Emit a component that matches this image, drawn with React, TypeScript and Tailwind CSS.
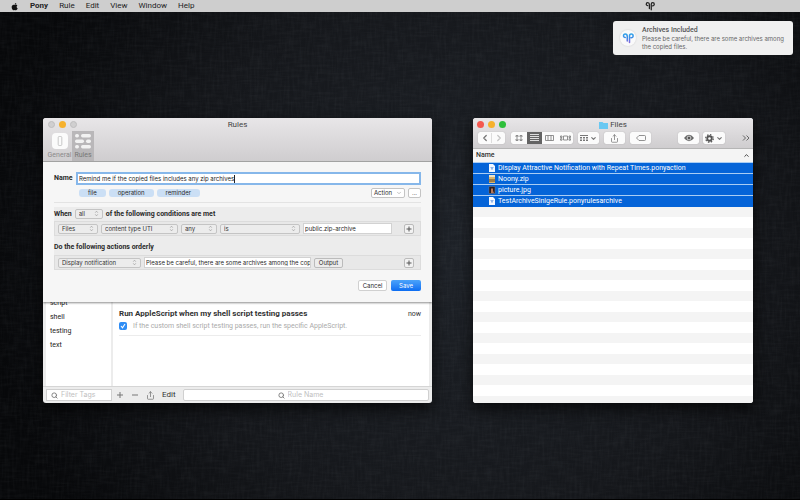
import type { ReactNode } from "react";
import { ChevronDown, ChevronLeft, ChevronRight, ChevronUp, Search, Share } from "lucide-react";

const control = "font-['Inter','Liberation_Sans',sans-serif] text-[6px]";

function Wallpaper() {
  return (
    <svg className="absolute inset-0 h-full w-full" aria-hidden="true">
      <filter id="weft" x="0" y="0" width="100%" height="100%">
        <feTurbulence type="fractalNoise" baseFrequency="0.06 0.4" numOctaves="2" seed="4" />
        <feColorMatrix values="0 0 0 0 0.6  0 0 0 0 0.65  0 0 0 0 0.7  1.600 0 0 0 -0.600" />
      </filter>
      <filter id="warp" x="0" y="0" width="100%" height="100%">
        <feTurbulence type="fractalNoise" baseFrequency="0.4 0.06" numOctaves="2" seed="9" />
        <feColorMatrix values="0 0 0 0 0.6  0 0 0 0 0.65  0 0 0 0 0.7  1.600 0 0 0 -0.600" />
      </filter>
      <rect width="100%" height="100%" filter="url(#weft)" opacity="0.04" />
      <rect width="100%" height="100%" filter="url(#warp)" opacity="0.04" />
    </svg>
  );
}

function Pony({ className, color }: { className: string; color: string }) {
  return (
    <svg viewBox="0 0 24 24" className={className} fill="none" stroke={color} strokeWidth="3" strokeLinecap="round" aria-hidden="true">
      <defs>
        <linearGradient id="pony-tint" gradientUnits="userSpaceOnUse" x1="0" y1="2" x2="0" y2="22">
          <stop offset="0" stopColor="#2fa8ea" />
          <stop offset="0.500" stopColor="#3f8be6" />
          <stop offset="1" stopColor="#8a62dc" />
        </linearGradient>
      </defs>
      <path d="M6.500 11A3.500 3.500 0 1 1 6.500 4c3 0 4 2 4 4.500V18" />
      <path d="M15 21V8c0-2.500 1.500-4 3.500-4a3.500 3.500 0 0 1 0 7.500H18" />
    </svg>
  );
}

function Steps() {
  return (
    <svg viewBox="0 0 6 8" className="pointer-events-none absolute top-px right-1 h-[7px] w-[5px]" fill="none" stroke="#999" strokeWidth="0.8" aria-hidden="true">
      <path d="M1.500 3 3 1.200 4.500 3M1.500 5 3 6.800 4.500 5" />
    </svg>
  );
}

function Popup({ label, value, width }: { label: string; value: string; width: string }) {
  return (
    <span className={`relative flex h-[10px] shrink-0 ${width}`}>
      <select aria-label={label} className={`w-full appearance-none rounded-[2px] border border-[#c4c4c4] bg-[#ececec] pl-[3px] leading-[8px] font-normal text-[#333] ${control}`}>
        <option>{value}</option>
      </select>
      <Steps />
    </span>
  );
}

function Row({ children }: { children: ReactNode }) {
  return (
    <div className="flex h-[15px] items-center gap-[3px] border border-[#dcdcdc] bg-[#e8e8e8] pr-1.5 pl-[3px]">
      {children}
      <button type="button" aria-label="Add" className="ml-auto flex h-[10px] w-[10px] items-center justify-center rounded-[2px] border border-[#bbb] bg-[#f2f2f2]">
        <svg viewBox="0 0 6 6" className="h-[6px] w-[6px]" stroke="#555" aria-hidden="true">
          <path d="M3 .5v5M.5 3h5" />
        </svg>
      </button>
    </div>
  );
}

function Sheet() {
  return (
    <form className="absolute inset-x-0 top-0 h-[140px] bg-[#f6f6f6] px-[11px] pt-2.5 text-[7px] leading-[9px] text-[#2a2a2a] shadow-[0_1px_2px_rgba(0,0,0,0.45)]">
      <div className="flex items-center gap-1">
        <label htmlFor="rule-name" className="w-[18px] font-bold">Name</label>
        <div className="flex h-[13px] min-w-0 flex-1 items-center border-2 border-[#86b7ea] bg-white px-px">
          <input id="rule-name" defaultValue="Remind me if the copied files includes any zip archives" className={`[field-sizing:content] leading-[9px] text-[#222] outline-none ${control}`} />
          <span className="h-2 w-px bg-[#222]" />
        </div>
      </div>
      <div className={`mt-[3px] flex items-center gap-[3px] pl-[25px] ${control}`}>
        {["file", "operation", "reminder"].map((t) => (
          <span key={t} className="h-2 rounded-[3px] bg-[#cbdff5] px-[9px] leading-[8px]">{t}</span>
        ))}
        <button type="button" className="ml-auto flex h-[10px] w-[34px] items-center justify-center gap-1 rounded-[2px] border border-[#c4c4c4] bg-white leading-[8px]">
          Action <ChevronDown className="h-[6px] w-[6px] text-[#888]" />
        </button>
        <button type="button" className="h-[10px] w-[13px] rounded-[2px] border border-[#c4c4c4] bg-white leading-[6px]">...</button>
      </div>
      <hr className="mt-1 border-[#e3e3e3]" />
      <div className="mt-1 bg-[#ececec]">
        <div className="flex h-[14px] items-center gap-[3px] font-bold">
          When <Popup label="Match" value="all" width="w-[28px]" /> of the following conditions are met
        </div>
        <Row>
          <Popup label="Subject" value="Files" width="w-[40px]" />
          <Popup label="Attribute" value="content type UTI" width="w-[77px]" />
          <Popup label="Quantity" value="any" width="w-[36px]" />
          <Popup label="Comparison" value="is" width="w-[80px]" />
          <input aria-label="Value" defaultValue="public.zip-archive" className={`h-[11px] w-[89px] border border-[#d2d2d2] bg-white pl-px ${control}`} />
        </Row>
        <h3 className="flex h-[19px] items-center pt-1 font-bold">Do the following actions orderly</h3>
        <Row>
          <Popup label="Action type" value="Display notification" width="w-[83px]" />
          <input aria-label="Message" defaultValue="Please be careful, there are some archives among the copied files." className={`h-[11px] w-[167px] border border-[#d2d2d2] bg-white pl-px ${control}`} />
          <button type="button" className={`h-[10px] w-[29px] rounded-[2px] border border-[#bbb] bg-[#ececec] leading-[8px] ${control}`}>Output</button>
        </Row>
      </div>
      <div className={`mt-2.5 flex justify-end gap-1 ${control}`}>
        <button type="button" className="h-[11px] w-[29px] rounded-[2px] border border-[#d0d0d0] bg-white leading-[9px]">Cancel</button>
        <button type="submit" className="h-[11px] w-[30px] rounded-[2px] bg-linear-to-b from-[#4ba3fa] to-[#0b6df2] leading-[11px] text-white">Save</button>
      </div>
    </form>
  );
}

function RulesWindow() {
  return (
    <section className="absolute top-[118px] left-[43px] flex h-[285px] w-[389px] flex-col overflow-hidden rounded-[3px] bg-[#ececec] shadow-[0_6px_16px_rgba(0,0,0,0.7)]">
      <header className="relative h-[44px] border-b border-[#a8a8a8] bg-linear-to-b from-[#e8e6e8] to-[#cfcdcf] text-[7px]">
        <h1 className="pt-0.5 text-center text-[8px] leading-[10px] text-[#444]">Rules</h1>
        <div className="absolute top-[3px] left-[5px] flex gap-1">
          <i className="h-[7px] w-[7px] rounded-full border border-[#bebdbe] bg-[#d0cfd0]" />
          <i className="h-[7px] w-[7px] rounded-full bg-[#f6b12d]" />
          <i className="h-[7px] w-[7px] rounded-full border border-[#bebdbe] bg-[#d0cfd0]" />
        </div>
        <nav className="flex pt-px pl-1 text-center leading-[9px]">
          <button className="flex w-[25px] flex-col items-center gap-0.5 pt-[2px] text-[#8b8a8b]">
            <svg viewBox="0 0 16 16" className="h-4 w-4" aria-hidden="true">
              <rect width="16" height="16" rx="4" fill="#fbfbfb" />
              <rect x="6.200" y="3.500" width="3.600" height="9" rx="1" fill="none" stroke="#bbb" strokeWidth="0.800" />
            </svg>
            General
          </button>
          <button className="flex h-[30px] w-[22px] flex-col items-center gap-0.5 bg-[#b9b7b9] pt-[2px] text-[#777]">
            <svg viewBox="0 0 16 16" className="h-4 w-4" fill="#f2f2f2" aria-hidden="true">
              <rect y="1" width="4" height="3.500" rx="1.700" />
              <rect x="6" y="1" width="10" height="3.500" rx="1.700" />
              <rect y="6.500" width="9" height="3.500" rx="1.700" />
              <rect x="11" y="6.500" width="5" height="3.500" rx="1.700" />
              <rect y="12" width="4" height="3.500" rx="1.700" />
              <rect x="6" y="12" width="10" height="3.500" rx="1.700" />
            </svg>
            Rules
          </button>
        </nav>
      </header>
      <div className="relative flex min-h-0 flex-1 flex-col">
        <div className="mx-[3px] flex min-h-0 flex-1">
          <ul className="w-[65px] bg-white pt-[134px] pl-1 text-[7px] leading-[14px] text-[#222]">
            {["script", "shell", "testing", "text"].map((t) => (
              <li key={t}>{t}</li>
            ))}
          </ul>
          <article className="ml-0.5 flex-1 bg-white pt-[147px] pr-2 pl-1.5">
            <div className="flex items-center justify-between leading-[10px]">
              <h2 className="text-[8px] font-bold text-[#333]">Run AppleScript when my shell script testing passes</h2>
              <time className="text-[7px] text-[#333]">now</time>
            </div>
            <label className="mt-0.5 flex items-center gap-1.5 border-b border-[#ececec] pb-1 text-[7px] leading-[10px] text-[#aaa]">
              <span className="relative flex h-2 w-2">
                <input type="checkbox" defaultChecked className="h-2 w-2 appearance-none rounded-[2px] bg-[#2f8df5]" />
                <svg viewBox="0 0 8 8" className="pointer-events-none absolute inset-0" fill="none" stroke="#fff" strokeWidth="1.100" aria-hidden="true">
                  <path d="m2 4 1.500 1.800L6 2" />
                </svg>
              </span>
              If the custom shell script testing passes, run the specific AppleScript.
            </label>
          </article>
        </div>
        <footer className="flex h-[17px] items-center border-t border-[#d5d5d5] px-[3px] text-[7px] text-[#777]">
          <label className="flex h-3 w-[66px] items-center gap-[3px] border border-[#d0d0d0] bg-white pl-1">
            <Search className="h-[7px] w-[7px] shrink-0" strokeWidth={3} />
            <input aria-label="Filter tags" placeholder="Filter Tags" className="w-full min-w-0 font-['Inter','Liberation_Sans',sans-serif] placeholder:text-[#c0c0c0]" />
          </label>
          <button aria-label="Add rule" className="ml-1 w-2">
            <svg viewBox="0 0 8 8" className="h-2 w-2" stroke="#777"><path d="M4 1v6M1 4h6" /></svg>
          </button>
          <button aria-label="Remove rule" className="ml-[7px] w-2">
            <svg viewBox="0 0 8 8" className="h-2 w-2" stroke="#777"><path d="M1 4h6" /></svg>
          </button>
          <button aria-label="Share" className="ml-[7px]"><Share className="h-[9px] w-[9px]" /></button>
          <button className="mx-[7px] text-[8px] text-[#333]">Edit</button>
          <label className="flex h-3 flex-1 items-center gap-[3px] rounded-[2px] border border-[#d0d0d0] bg-white pl-[94px]">
            <Search className="h-[7px] w-[7px] shrink-0" strokeWidth={3} />
            <input aria-label="Rule name" placeholder="Rule Name" className="w-full min-w-0 font-['Inter','Liberation_Sans',sans-serif] placeholder:text-[#c0c0c0]" />
          </label>
        </footer>
        <Sheet />
      </div>
    </section>
  );
}

const tool = "flex h-3 items-center justify-center rounded-[2px] bg-[#fbfbfb] text-[#777] shadow-[0_0_1px_rgba(0,0,0,0.3)]";

const files = [
  { name: "Display Attractive Notification with Repeat Times.ponyaction", kind: "doc" },
  { name: "Noony.zip", kind: "zip" },
  { name: "picture.jpg", kind: "jpg" },
  { name: "TestArchiveSinlgeRule.ponyrulesarchive", kind: "doc" },
];

function FileIcon({ kind }: { kind: string }) {
  return (
    <svg viewBox="0 0 8 8" className="h-2 w-2" aria-hidden="true">
      {kind === "doc" && <path d="M1 0h4l2 2v6H1z" fill="#f4f8ff" />}
      {kind === "doc" && <path d="M2.500 3.500h1.200v2M5.500 3.500H4.300v2" fill="none" stroke="#5b93dd" strokeWidth="0.700" />}
      {kind === "zip" && <path d="M1 0h6v8H1z" fill="#d9b56e" />}
      {kind === "zip" && <path d="M1 4h6v3H1z" fill="#9d7d48" />}
      {kind === "zip" && <path d="M1 0h6v2H1z" fill="#eee3c8" />}
      {kind === "jpg" && <path d="M1 .5h6v7H1z" fill="#2b2023" stroke="#8d8a94" strokeWidth="0.400" />}
      {kind === "jpg" && <path d="M3 2.500h2v2.500l1 2H3z" fill="#b97858" />}
    </svg>
  );
}

function FinderWindow() {
  return (
    <section className="absolute top-[118px] left-[473px] flex h-[285px] w-[280px] flex-col overflow-hidden rounded-[3px] bg-white shadow-[0_6px_16px_rgba(0,0,0,0.7)]">
      <header className="relative h-[31px] border-b border-[#b5b5b5] bg-linear-to-b from-[#e8e6e8] to-[#cfcdcf]">
        <div className="absolute top-[3px] left-1 flex gap-1">
          <i className="h-[7px] w-[7px] rounded-full bg-[#f4584f]" />
          <i className="h-[7px] w-[7px] rounded-full bg-[#f6b12d]" />
          <i className="h-[7px] w-[7px] rounded-full bg-[#2ebf3b]" />
        </div>
        <h2 className="flex items-center justify-center gap-0.5 pt-0.5 text-[8px] leading-[10px] text-[#444]">
          <svg viewBox="0 0 9 8" className="h-2 w-[9px]" aria-hidden="true"><path d="M0 1h3.500l1 1H9v6H0z" fill="#69c8f2" /></svg>
          Files
        </h2>
        <div className="flex items-center pt-0.5 pr-[3px] pl-[5px]">
          <div className={`${tool} w-[27px] divide-x divide-[#ddd]`}>
            <button aria-label="Back" className="flex flex-1 justify-center"><ChevronLeft className="h-[10px] w-[10px]" strokeWidth={3} /></button>
            <button aria-label="Forward" className="flex flex-1 justify-center text-[#c4c4c4]"><ChevronRight className="h-[10px] w-[10px]" strokeWidth={3} /></button>
          </div>
          <div className={`${tool} ml-1.5 w-[62px] overflow-hidden`}>
            <button aria-label="Icons" className="flex h-full flex-1 items-center justify-center">
              <svg viewBox="0 0 8 8" className="h-2 w-2" fill="none" stroke="#777" strokeWidth="0.800"><path d="M1 1.500h2v1.500H1zM5 1.500h2v1.500H5zM1 5h2v1.500H1zM5 5h2v1.500H5z" /></svg>
            </button>
            <button aria-label="List" className="flex h-full flex-1 items-center justify-center bg-[#646464]">
              <svg viewBox="0 0 9 8" className="h-2 w-[9px]" stroke="#ddd"><path d="M0 .5h9M0 2.500h9M0 4.500h9M0 6.500h9" /></svg>
            </button>
            <button aria-label="Columns" className="flex h-full flex-1 items-center justify-center">
              <svg viewBox="0 0 9 8" className="h-2 w-[9px]" fill="none" stroke="#777" strokeWidth="0.800"><path d="M.5 1.500h8v5h-8zM3 1.500v5M6 1.500v5" /></svg>
            </button>
            <button aria-label="Gallery" className="flex h-full flex-1 items-center justify-center">
              <svg viewBox="0 0 11 8" className="h-2 w-[11px]" fill="none" stroke="#777" strokeWidth="0.800"><path d="M3.500 2h4v4h-4zM.5 2h1.500v1.500H.5zM.5 4.700h1.500v1.500H.5zM9 2h1.500v1.500H9zM9 4.700h1.500v1.500H9z" /></svg>
            </button>
          </div>
          <button aria-label="Group" className={`${tool} ml-[5px] w-[21px] gap-0.5`}>
            <svg viewBox="0 0 8 8" className="h-2 w-2" fill="#777"><path d="M0 1h8v1H0zM0 3h2v1.500H0zM3 3h2v1.500H3zM6 3h2v1.500H6zM0 5.500h2V7H0zM3 5.500h2V7H3zM6 5.500h2V7H6z" /></svg>
            <ChevronDown className="h-[7px] w-[7px]" strokeWidth={4} />
          </button>
          <button aria-label="Share" className={`${tool} ml-[5px] w-[21px]`}><Share className="h-[9px] w-[9px]" /></button>
          <button aria-label="Tags" className={`${tool} ml-[5px] w-[21px]`}>
            <svg viewBox="0 0 10 8" className="h-2 w-[10px]" fill="none" stroke="#777" strokeWidth="0.800"><path d="M3 1.500h5.500q1 0 1 1v3q0 1-1 1H3L.500 4z" /></svg>
          </button>
          <button aria-label="Quick look" className={`${tool} ml-[27px] w-[21px]`}>
            <svg viewBox="0 0 10 8" className="h-2 w-[10px]" aria-hidden="true"><path d="M0 4q5-6.500 10 0-5 6.500-10 0z" fill="#666" /><circle cx="5" cy="4" r="1.900" fill="#555" stroke="#fff" strokeWidth="0.700" /></svg>
          </button>
          <button aria-label="Actions" className={`${tool} ml-1 w-[22px] gap-[2px]`}>
            <svg viewBox="0 0 10 10" className="h-[9px] w-[9px]" fill="none" stroke="#555"><circle cx="5" cy="5" r="2.500" strokeWidth="2" /><circle cx="5" cy="5" r="4.200" strokeDasharray="1.650" strokeWidth="1.400" /></svg>
            <ChevronDown className="h-[7px] w-[7px]" strokeWidth={4} />
          </button>
          <button aria-label="More" className="ml-auto">
            <svg viewBox="0 0 8 8" className="h-2 w-2" fill="none" stroke="#666"><path d="m1 1.500 2.500 2.500L1 6.500M4.500 1.500 7 4 4.500 6.500" /></svg>
          </button>
        </div>
      </header>
      <table className="w-full border-collapse text-[7px]">
        <thead>
          <tr className="h-[13px] bg-[#f4f4f4]">
            <th className="p-0 pl-[3px] text-left leading-[13px] font-medium text-[#333]">
              <span className="flex items-center justify-between pr-[3px]">Name <ChevronUp className="h-[7px] w-[7px]" strokeWidth={3} /></span>
            </th>
          </tr>
        </thead>
        <tbody>
          {files.map((f) => (
            <tr key={f.name} className="h-[11px] border-t border-[#a9cdf4] bg-[#0564d8] text-white">
              <td className="p-0 pl-[15px]">
                <span className="flex h-[10px] items-center gap-0.5 leading-[10px]">
                  <FileIcon kind={f.kind} />
                  {f.name}
                </span>
              </td>
            </tr>
          ))}
        </tbody>
      </table>
      <div className="flex-1 bg-[repeating-linear-gradient(180deg,#f4f4f4_0_10px,#fff_10px_21px)]" />
    </section>
  );
}

export default function App() {
  return (
    <main className="relative min-h-screen overflow-hidden border-b border-black bg-[radial-gradient(ellipse_60%_90%_at_58%_50%,#1e2228_0%,#15171b_60%,#07080a_100%)] font-['Roboto','Liberation_Sans',sans-serif]">
      <Wallpaper />
      <nav className="relative flex h-3 items-center gap-[11px] bg-[#cecece] pl-[11px] text-[8px] leading-[12px] text-[#222]">
        <svg viewBox="0 0 24 24" className="h-[9px] w-2" fill="#111" aria-hidden="true">
          <path d="M17 12.500c0-2.500 2-3.700 2.200-3.800-1.200-1.800-3-2-3.700-2-1.600-.2-3 .9-3.800.9s-2-.9-3.300-.9C4.500 6.800 2 9.800 2 13.500 2 18 5 23 7.800 23c1.300 0 1.900-.8 3.600-.8s2.200.8 3.600.8c2.200 0 4.300-3.500 5-6-2.400-1-3-2.800-3-4.500zM14.500 5c.8-1 1.300-2.300 1.100-3.700-1.300.1-2.600.8-3.400 1.800-.8.900-1.400 2.200-1.200 3.500 1.300.1 2.700-.6 3.500-1.600z" />
        </svg>
        <a href="#pony" className="font-bold">Pony</a>
        <a href="#rule">Rule</a>
        <a href="#edit">Edit</a>
        <a href="#view">View</a>
        <a href="#window">Window</a>
        <a href="#help">Help</a>
        <span className="mr-[145px] ml-auto"><Pony className="h-[10px] w-[10px]" color="#222" /></span>
      </nav>
      <aside className="absolute top-[21px] right-[7px] flex h-[34px] w-[180px] items-center gap-1.5 rounded-[3px] bg-[#f0f0f0] pl-[7px] text-[#666]">
        <span className="flex h-4 w-4 shrink-0 items-center justify-center rounded-full bg-[#fafafa] shadow-[0_0_2px_rgba(0,0,0,0.15)]">
          <Pony className="h-3 w-3" color="url(#pony-tint)" />
        </span>
        <div>
          <h2 className="text-[7px] leading-[9px] font-medium text-[#555]">Archives Included</h2>
          <p className={`leading-[8px] ${control}`}>Please be careful, there are some archives among the copied files.</p>
        </div>
      </aside>
      <RulesWindow />
      <FinderWindow />
    </main>
  );
}
